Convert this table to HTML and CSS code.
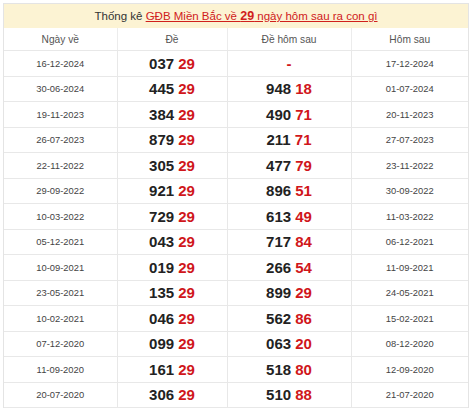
FILE: index.html
```html
<!DOCTYPE html>
<html>
<head>
<meta charset="utf-8">
<link rel="stylesheet" href="styles.css">
</head>
<body>
<div class="wrap">
  <div class="title">Thống kê <a href="#">GĐB Miền Bắc về <b>29</b> ngày hôm sau ra con gì</a></div>
  <table class="tbl">
    <colgroup><col class="c1"><col class="c2"><col class="c3"><col class="c4"></colgroup>
    <thead>
      <tr><th>Ngày về</th><th>Đề</th><th>Đề hôm sau</th><th>Hôm sau</th></tr>
    </thead>
    <tbody>
      <tr><td>16-12-2024</td><td class="num">037 <span class="r">29</span></td><td class="num"><span class="r">-</span></td><td>17-12-2024</td></tr>
      <tr><td>30-06-2024</td><td class="num">445 <span class="r">29</span></td><td class="num">948 <span class="r">18</span></td><td>01-07-2024</td></tr>
      <tr><td>19-11-2023</td><td class="num">384 <span class="r">29</span></td><td class="num">490 <span class="r">71</span></td><td>20-11-2023</td></tr>
      <tr><td>26-07-2023</td><td class="num">879 <span class="r">29</span></td><td class="num">211 <span class="r">71</span></td><td>27-07-2023</td></tr>
      <tr><td>22-11-2022</td><td class="num">305 <span class="r">29</span></td><td class="num">477 <span class="r">79</span></td><td>23-11-2022</td></tr>
      <tr><td>29-09-2022</td><td class="num">921 <span class="r">29</span></td><td class="num">896 <span class="r">51</span></td><td>30-09-2022</td></tr>
      <tr><td>10-03-2022</td><td class="num">729 <span class="r">29</span></td><td class="num">613 <span class="r">49</span></td><td>11-03-2022</td></tr>
      <tr><td>05-12-2021</td><td class="num">043 <span class="r">29</span></td><td class="num">717 <span class="r">84</span></td><td>06-12-2021</td></tr>
      <tr><td>10-09-2021</td><td class="num">019 <span class="r">29</span></td><td class="num">266 <span class="r">54</span></td><td>11-09-2021</td></tr>
      <tr><td>23-05-2021</td><td class="num">135 <span class="r">29</span></td><td class="num">899 <span class="r">29</span></td><td>24-05-2021</td></tr>
      <tr><td>10-02-2021</td><td class="num">046 <span class="r">29</span></td><td class="num">562 <span class="r">86</span></td><td>15-02-2021</td></tr>
      <tr><td>07-12-2020</td><td class="num">099 <span class="r">29</span></td><td class="num">063 <span class="r">20</span></td><td>08-12-2020</td></tr>
      <tr><td>11-09-2020</td><td class="num">161 <span class="r">29</span></td><td class="num">518 <span class="r">80</span></td><td>12-09-2020</td></tr>
      <tr><td>20-07-2020</td><td class="num">306 <span class="r">29</span></td><td class="num">510 <span class="r">88</span></td><td>21-07-2020</td></tr>
    </tbody>
  </table>
</div>
</body>
</html>
```
FILE: styles.css
```css
html, body {
  margin: 0;
  padding: 0;
  background: #ffffff;
  font-family: "Liberation Sans", Arial, sans-serif;
}
.wrap {
  margin: 3px 0 0 3px;
  width: 466px;
  border: 1px solid #e4e4e4;
  border-bottom: none;
  box-sizing: border-box;
}
.title {
  background: #fcf3d3;
  height: 24px;
  line-height: 24px;
  text-align: center;
  font-size: 11.5px;
  color: #333333;
}
.title a {
  color: #d0201c;
  text-decoration: underline;
}
.title b {
  font-weight: bold;
  font-size: 12.5px;
}
.tbl {
  width: 100%;
  border-collapse: collapse;
  table-layout: fixed;
}
.c1 { width: 113px; }
.c2 { width: 110px; }
.c3 { width: 124px; }
.c4 { width: auto; }
.tbl th {
  height: 22px;
  font-weight: normal;
  font-size: 10.2px;
  color: #555555;
  border-bottom: 1px solid #e8e8e8;
  border-left: 1px solid #ececec;
  padding: 0;
}
.tbl td {
  height: 24.5px;
  padding: 0;
  text-align: center;
  font-size: 9.4px;
  color: #444444;
  border-bottom: 1px solid #e8e8e8;
  border-left: 1px solid #e8e8e8;
}
.tbl th:first-child, .tbl td:first-child { border-left: none; }
.tbl td.num {
  font-size: 15px;
  font-weight: bold;
  color: #222222;
}
.r { color: #d0161b; }
```
